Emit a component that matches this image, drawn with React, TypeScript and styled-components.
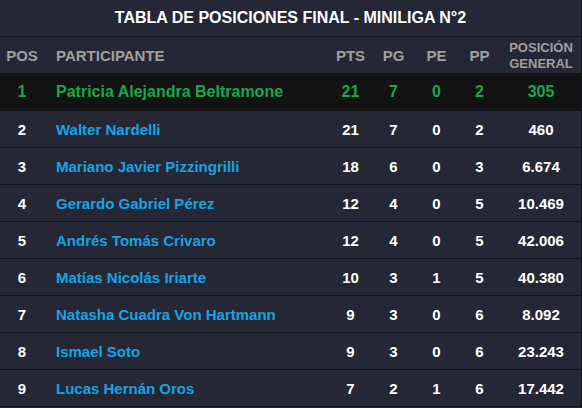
import React, { FC } from "react";
import styled, { createGlobalStyle } from "styled-components";

const GlobalStyle = createGlobalStyle`
  html, body {
    margin: 0;
    padding: 0;
    background: #252834;
  }
  body {
    font-family: "Liberation Sans", Arial, sans-serif;
  }
`;

type RowType = {
  pos: number;
  name: string;
  pts: number;
  pg: number;
  pe: number;
  pp: number;
  general: string;
};

const rows: RowType[] = [
  { pos: 1, name: "Patricia Alejandra Beltramone", pts: 21, pg: 7, pe: 0, pp: 2, general: "305" },
  { pos: 2, name: "Walter Nardelli", pts: 21, pg: 7, pe: 0, pp: 2, general: "460" },
  { pos: 3, name: "Mariano Javier Pizzingrilli", pts: 18, pg: 6, pe: 0, pp: 3, general: "6.674" },
  { pos: 4, name: "Gerardo Gabriel Pérez", pts: 12, pg: 4, pe: 0, pp: 5, general: "10.469" },
  { pos: 5, name: "Andrés Tomás Crivaro", pts: 12, pg: 4, pe: 0, pp: 5, general: "42.006" },
  { pos: 6, name: "Matías Nicolás Iriarte", pts: 10, pg: 3, pe: 1, pp: 5, general: "40.380" },
  { pos: 7, name: "Natasha Cuadra Von Hartmann", pts: 9, pg: 3, pe: 0, pp: 6, general: "8.092" },
  { pos: 8, name: "Ismael Soto", pts: 9, pg: 3, pe: 0, pp: 6, general: "23.243" },
  { pos: 9, name: "Lucas Hernán Oros", pts: 7, pg: 2, pe: 1, pp: 6, general: "17.442" },
];

const Table = styled.div`
  width: 581px;
  border-right: 1px solid #111216;
  background: #252834;
`;

const Title = styled.div`
  height: 36px;
  border-bottom: 1px solid #111216;
  display: flex;
  align-items: center;
  justify-content: center;
  color: #ffffff;
  font-size: 16px;
  font-weight: bold;
`;

const Grid = styled.div<{ $leader?: boolean }>`
  display: grid;
  grid-template-columns: 44px 285px 43px 43px 43px 43px 80px;
  height: 36px;
  align-items: center;
  border-bottom: 1px solid #111216;
  background: ${(p) => (p.$leader ? "#131313" : "#252834")};
  font-weight: bold;
  font-size: ${(p) => (p.$leader ? "16px" : "15px")};
  color: ${(p) => (p.$leader ? "#17a84a" : "#ffffff")};
`;

const HeadGrid = styled(Grid)`
  color: #a09f9c;
  font-size: 15px;
`;

const Cell = styled.div`
  text-align: center;
`;

const NameCell = styled.div<{ $leader?: boolean; $head?: boolean }>`
  padding-left: 12px;
  white-space: nowrap;
  color: ${(p) => (p.$head ? "inherit" : p.$leader ? "#17a84a" : "#17a3e6")};
`;

const TwoLine = styled(Cell)`
  font-size: 13px;
  line-height: 16px;
  padding-top: 1px;
`;

const App: FC = () => {
  return (
    <>
      <GlobalStyle />
      <Table>
        <Title>TABLA DE POSICIONES FINAL - MINILIGA N°2</Title>
        <HeadGrid>
          <Cell>POS</Cell>
          <NameCell $head>PARTICIPANTE</NameCell>
          <Cell>PTS</Cell>
          <Cell>PG</Cell>
          <Cell>PE</Cell>
          <Cell>PP</Cell>
          <TwoLine>
            POSICIÓN
            <br />
            GENERAL
          </TwoLine>
        </HeadGrid>
        {rows.map((r) => (
          <Grid key={r.pos} $leader={r.pos === 1}>
            <Cell>{r.pos}</Cell>
            <NameCell $leader={r.pos === 1}>{r.name}</NameCell>
            <Cell>{r.pts}</Cell>
            <Cell>{r.pg}</Cell>
            <Cell>{r.pe}</Cell>
            <Cell>{r.pp}</Cell>
            <Cell>{r.general}</Cell>
          </Grid>
        ))}
      </Table>
    </>
  );
};

export default App;
